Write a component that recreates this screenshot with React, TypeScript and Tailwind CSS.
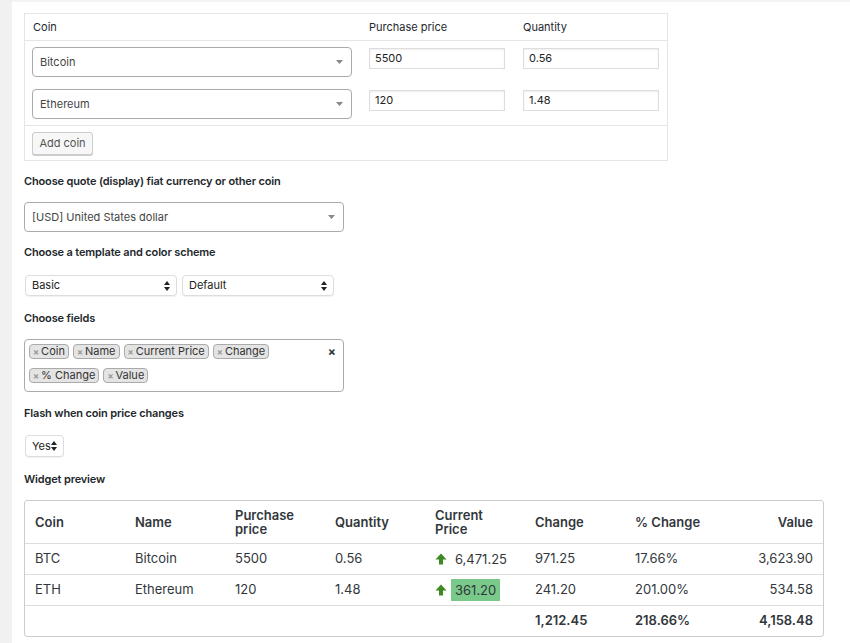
import React from 'react';

const Caret = () => (
  <svg width="7" height="4" viewBox="0 0 7 4" className="absolute right-[8px] top-1/2 -translate-y-1/2">
    <path d="M0 0h7L3.5 4z" fill="#888" />
  </svg>
);

const UpDown = () => (
  <svg width="6" height="10" viewBox="0 0 6 10" className="absolute right-[6px] top-1/2 -translate-y-1/2">
    <path d="M0 4L3 0l3 4z M0 6l3 4 3-4z" fill="#222" />
  </svg>
);

const UpArrow = () => (
  <svg width="12" height="12" viewBox="0 0 12 12" className="shrink-0">
    <path d="M6 0.5L11.5 6.5H8V11.5H4V6.5H0.5z" fill="#3d8a22" />
  </svg>
);

const Select2 = ({ label, className = '' }: { label: string; className?: string }) => (
  <div className={`relative flex h-[30px] items-center rounded-[4px] border border-[#aaa] bg-white pl-[7px] text-[11px] text-[#444] ${className}`}>
    {label}
    <Caret />
  </div>
);

const NativeSelect = ({ label, width }: { label: string; width: string }) => (
  <div className={`relative flex h-[21px] items-center rounded-[4px] border border-[#ddd] bg-white pl-[6px] text-[11px] text-[#222] shadow-[0_1px_1px_rgba(0,0,0,0.06)] ${width}`}>
    {label}
    <UpDown />
  </div>
);

const TextInput = ({ value }: { value: string }) => (
  <div className="mt-px flex h-[21px] w-[136px] items-center border border-[#ddd] bg-white pl-[5px] text-[11px] text-[#222] shadow-[inset_0_1px_2px_rgba(0,0,0,0.07)]">
    {value}
  </div>
);

const Label = ({ children, className = '' }: { children: React.ReactNode; className?: string }) => (
  <div className={`text-[11px] font-semibold leading-[14px] tracking-[-0.15px] text-[#23282d] ${className}`}>{children}</div>
);

const Tag = ({ text }: { text: string }) => (
  <div className="flex h-[15px] items-center gap-[2px] rounded-[4px] border border-[#aaa] bg-[#e4e4e4] px-[3px] text-[11px] text-[#333]">
    <span className="text-[9px] font-bold text-[#999]">×</span>
    {text}
  </div>
);

const coins = [
  { name: 'Bitcoin', price: '5500', qty: '0.56' },
  { name: 'Ethereum', price: '120', qty: '1.48' },
];

const rows = [
  { sym: 'BTC', name: 'Bitcoin', price: '5500', qty: '0.56', cur: '6,471.25', flash: false, change: '971.25', pct: '17.66%', value: '3,623.90' },
  { sym: 'ETH', name: 'Ethereum', price: '120', qty: '1.48', cur: '361.20', flash: true, change: '241.20', pct: '201.00%', value: '534.58' },
];

const cell = 'px-[10px] flex items-center';

export default function App() {
  return (
    <div className="flex min-h-[643px] bg-white font-['Inter',sans-serif] text-[#23282d]">
      <div className="w-3 shrink-0 bg-[#f1f1f1]" />
      <div className="flex-1 border-t-2 border-[#f3f3f3] pl-3 pt-[11px]">
        {/* Coins table */}
        <div className="w-[644px] border border-[#e5e5e5]">
          <div className="grid h-[27px] grid-cols-[336px_154px_152px] items-center border-b border-[#e5e5e5] text-[11px] text-[#23282d]">
            <div className="pl-[8px]">Coin</div>
            <div className="pl-[8px]">Purchase price</div>
            <div className="pl-[8px]">Quantity</div>
          </div>
          <div className="flex flex-col gap-[12px] py-[6px]">
            {coins.map((c) => (
              <div key={c.name} className="grid grid-cols-[336px_154px_152px] items-start">
                <div className="pl-[7px]">
                  <Select2 label={c.name} className="w-[320px]" />
                </div>
                <div className="pl-[8px]">
                  <TextInput value={c.price} />
                </div>
                <div className="pl-[8px]">
                  <TextInput value={c.qty} />
                </div>
              </div>
            ))}
          </div>
          <div className="flex border-t border-[#e5e5e5] pb-[5px] pl-[7px] pt-[6px]">
            <button className="h-[23px] w-[61px] rounded-[3px] border border-[#ccc] bg-[#f7f7f7] text-[11px] text-[#555] shadow-[0_1px_0_#ccc]">
              Add coin
            </button>
          </div>
        </div>

        <Label className="mt-[13px]">Choose quote (display) fiat currency or other coin</Label>
        <Select2 label="[USD] United States dollar" className="mt-[14px] w-[320px]" />

        <Label className="mt-[13px]">Choose a template and color scheme</Label>
        <div className="mt-[16px] flex gap-[5px] pl-px">
          <NativeSelect label="Basic" width="w-[152px]" />
          <NativeSelect label="Default" width="w-[152px]" />
        </div>

        <Label className="mt-[15px]">Choose fields</Label>
        <div className="relative mt-[14px] h-[53px] w-[320px] rounded-[4px] border border-[#aaa] bg-white">
          <div className="flex w-[290px] flex-wrap gap-x-[4px] gap-y-[9px] pl-[4px] pt-[4px]">
            <Tag text="Coin" />
            <Tag text="Name" />
            <Tag text="Current Price" />
            <Tag text="Change" />
            <Tag text="% Change" />
            <Tag text="Value" />
          </div>
          <span className="absolute right-[7px] top-[3px] text-[12px] font-bold text-[#333]">×</span>
        </div>

        <Label className="mt-[14px]">Flash when coin price changes</Label>
        <div className="mt-[15px] pl-px">
          <NativeSelect label="Yes" width="w-[39px] h-[22px]" />
        </div>

        <Label className="mt-[15px]">Widget preview</Label>

        {/* Widget preview */}
        <div className="mt-[14px] w-[800px] rounded-[3px] border border-[#ccc] text-[13px] text-[#32373c]">
          <div className="grid h-[43px] grid-cols-[100px_100px_100px_100px_100px_100px_100px_98px] border-b border-[#ddd] font-semibold leading-[14px]">
            <div className={cell}>Coin</div>
            <div className={cell}>Name</div>
            <div className={cell}>Purchase price</div>
            <div className={cell}>Quantity</div>
            <div className={cell}>Current Price</div>
            <div className={cell}>Change</div>
            <div className={cell}>% Change</div>
            <div className={`${cell} justify-end`}>Value</div>
          </div>
          {rows.map((r) => (
            <div key={r.sym} className="grid h-[31px] grid-cols-[100px_100px_100px_100px_100px_100px_100px_98px] border-b border-[#ddd]">
              <div className={cell}>{r.sym}</div>
              <div className={cell}>{r.name}</div>
              <div className={cell}>{r.price}</div>
              <div className={cell}>{r.qty}</div>
              <div className={`${cell} gap-[4px]`}>
                <UpArrow />
                <span className={`px-[4px] leading-[22px] ${r.flash ? 'bg-[#79c98a]' : ''}`}>{r.cur}</span>
              </div>
              <div className={cell}>{r.change}</div>
              <div className={cell}>{r.pct}</div>
              <div className={`${cell} justify-end`}>{r.value}</div>
            </div>
          ))}
          <div className="grid h-[30px] grid-cols-[100px_100px_100px_100px_100px_100px_100px_98px] font-semibold">
            <div className={cell} />
            <div className={cell} />
            <div className={cell} />
            <div className={cell} />
            <div className={cell} />
            <div className={cell}>1,212.45</div>
            <div className={cell}>218.66%</div>
            <div className={`${cell} justify-end`}>4,158.48</div>
          </div>
        </div>
      </div>
    </div>
  );
}
